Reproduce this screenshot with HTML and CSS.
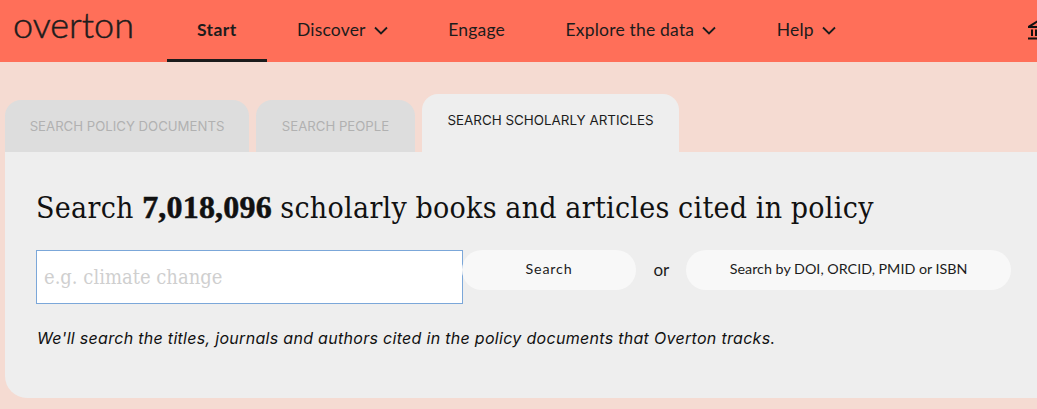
FILE: index.html
```html
<!DOCTYPE html>
<html lang="en">
<head>
    <meta charset="UTF-8">
    <title>Overton search</title>
    <link rel="stylesheet" href="styles.css">
</head>
<body>
    <header class="topbar">
        <a class="logo">overton</a>
        <nav class="nav">
            <a class="nav-item active">Start</a>
            <a class="nav-item">Discover
                <svg class="chevron" viewBox="0 0 14 9"><path d="M1 1.5 7 7.5 13 1.5"/></svg>
            </a>
            <a class="nav-item">Engage</a>
            <a class="nav-item">Explore the data
                <svg class="chevron" viewBox="0 0 14 9"><path d="M1 1.5 7 7.5 13 1.5"/></svg>
            </a>
            <a class="nav-item">Help
                <svg class="chevron" viewBox="0 0 14 9"><path d="M1 1.5 7 7.5 13 1.5"/></svg>
            </a>
        </nav>
        <svg class="bank" viewBox="0 0 20 20">
            <path d="M10 0 0 6v2h20V6ZM10 2.2 16 6H4Z" fill-rule="evenodd"/>
            <path d="M3 9.5h2v6.5H3ZM7 9.5h2v6.5H7ZM11 9.5h2v6.5h-2ZM15 9.5h2v6.5h-2ZM0 17.5h20v2H0Z"/>
        </svg>
    </header>

    <main class="main">
        <div class="tabs">
            <a class="tab">SEARCH POLICY DOCUMENTS</a>
            <a class="tab tab-people">SEARCH PEOPLE</a>
            <a class="tab selected">SEARCH SCHOLARLY ARTICLES</a>
        </div>
        <section class="panel">
            <h1>Search <b>7,018,096</b> scholarly books and articles cited in policy</h1>
            <form class="search-row">
                <input type="text" class="search-input" placeholder="e.g. climate change">
                <button type="button" class="btn btn-search">Search</button>
                <span class="or">or</span>
                <button type="button" class="btn btn-doi">Search by DOI, ORCID, PMID or ISBN</button>
            </form>
            <p class="hint">We'll search the titles, journals and authors cited in the policy documents that Overton tracks.</p>
        </section>
    </main>
</body>
</html>
```

FILE: styles.css
```css
html, body {
    margin: 0;
    height: 409px;
    overflow: hidden;
}

body {
    font-family: "Lato", "Noto Sans", sans-serif;
    background: #f5dbd2;
    color: #1c1c1c;
}

.topbar {
    display: flex;
    height: 62px;
    background: #ff6f59;
    overflow: hidden;
    position: relative;
}

.logo {
    width: 167px;
    padding-left: 13px;
    box-sizing: border-box;
    font-size: 36px;
    font-weight: 300;
    line-height: 48px;
    -webkit-text-stroke: 0.5px #1c1c1c;
}

.nav {
    display: flex;
}

.nav-item {
    display: flex;
    align-items: center;
    gap: 8px;
    padding: 0 30.25px;
    height: 59px;
    font-size: 17.5px;
    letter-spacing: 0.2px;
}

.nav-item.active {
    padding: 0 30px;
    font-weight: 700;
    letter-spacing: 0.4px;
    border-bottom: 3px solid #1c1c1c;
}

.chevron {
    width: 14px;
    height: 9px;
    margin-top: 2px;
    fill: none;
    stroke: #1c1c1c;
    stroke-width: 1.8;
}

.bank {
    width: 20px;
    height: 20px;
    position: absolute;
    left: 1028px;
    top: 20px;
    fill: #111;
}

.main {
    padding: 32px 0 0 5px;
}

.tabs {
    display: flex;
    align-items: flex-end;
    gap: 7px;
    height: 58px;
}

.tab {
    display: flex;
    align-items: center;
    justify-content: center;
    box-sizing: border-box;
    width: 244px;
    height: 52px;
    background: #dddddd;
    border-radius: 16px 16px 0 0;
    color: #b1b1b1;
    font-family: "Inter", sans-serif;
    font-size: 13.2px;
}

.tab-people {
    width: 159px;
}

.tab.selected {
    width: 257px;
    height: 58px;
    padding-bottom: 6px;
    background: #eeeeee;
    color: #1c1c1c;
    font-size: 13.4px;
}

.panel {
    box-sizing: border-box;
    height: 246px;
    margin-right: -20px;
    padding: 38px 46px 0 31px;
    background: #eeeeee;
    border-radius: 0 0 20px 22px;
}

h1 {
    margin: 0;
    font-family: "DejaVu Serif Condensed", "DejaVu Serif", serif;
    font-size: 30px;
    font-weight: 400;
    line-height: 36px;
    letter-spacing: 0.3px;
    word-spacing: -0.5px;
    color: #111;
}

h1 b {
    font-family: "Liberation Serif", serif;
    font-size: 32px;
    font-weight: 700;
    line-height: 1;
    letter-spacing: 0.2px;
    -webkit-text-stroke: 0.5px #111;
}

.search-row {
    display: flex;
    align-items: flex-start;
    margin-top: 24px;
}

.search-input {
    box-sizing: border-box;
    width: 427px;
    height: 54px;
    padding: 0 7px;
    background: white;
    border: 1px solid #7ba7d9;
    font-family: "DejaVu Serif Condensed", "DejaVu Serif", serif;
    font-size: 20px;
    outline: none;
}

.search-input::placeholder {
    color: #cfcfcf;
}

.btn {
    height: 40px;
    padding: 0 0 3px;
    border: none;
    border-radius: 20px;
    background: #f8f8f8;
    color: #1c1c1c;
    font-family: "Lato", sans-serif;
    font-size: 14.3px;
}

.btn-search {
    width: 175px;
    margin-left: -1px;
    letter-spacing: 0.8px;
}

.or {
    width: 50px;
    text-align: center;
    line-height: 40px;
    font-size: 17px;
}

.btn-doi {
    width: 325px;
}

.hint {
    margin: 24px 0 0 1px;
    font-family: "Inter", sans-serif;
    font-size: 16px;
    letter-spacing: 0.3px;
    font-style: italic;
    color: #111;
}
```
